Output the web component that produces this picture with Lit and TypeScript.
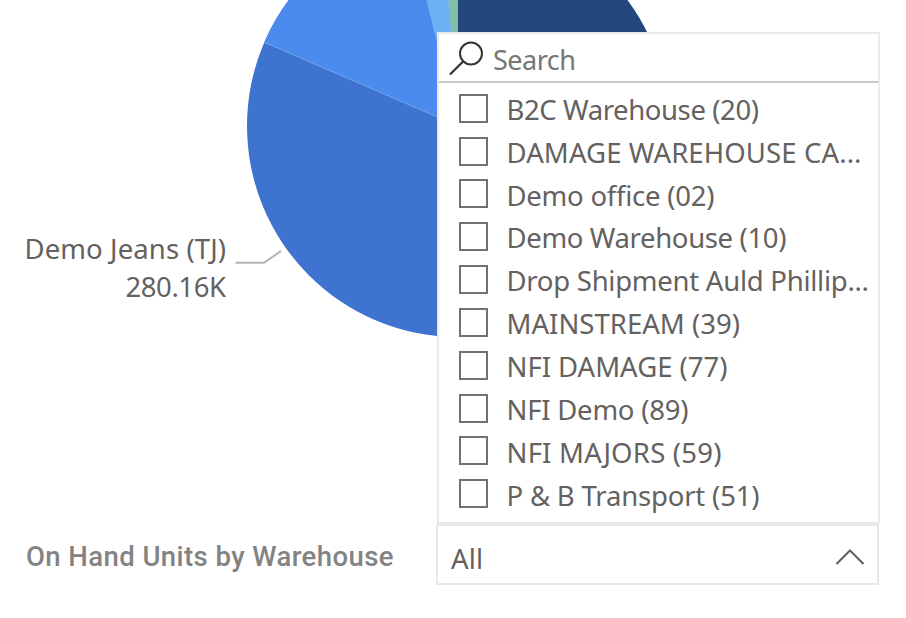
import { LitElement, html, css } from "lit";
import { customElement, property } from "lit/decorators.js";

/** A single line of text whose tracking is adjusted to fill a given width. */
@customElement("fit-text")
class FitText extends LitElement {
  @property() text = "";
  @property({ type: Number }) width = 0;

  static styles = css`
    :host { display: block; white-space: pre; }
    .run { display: inline-block; font-kerning: normal; font-variant-ligatures: none; }
  `;

  updated() {
    const run = this.renderRoot.querySelector(".run") as HTMLElement;
    run.style.letterSpacing = "0px";
    const natural = run.getBoundingClientRect().width;
    const gaps = Math.max(1, this.text.length - 1);
    const spacing = (this.width - natural) / gaps;
    run.style.letterSpacing = `${spacing}px`;
    run.style.marginRight = `${-spacing}px`;
  }

  render() {
    return html`<span class="run">${this.text}</span>`;
  }
}

interface Option { label: string; width: number; }

const OPTIONS: Option[] = [
  { label: "B2C Warehouse (20)", width: 252.5 },
  { label: "DAMAGE WAREHOUSE CA...", width: 355 },
  { label: "Demo office (02)", width: 208 },
  { label: "Demo Warehouse (10)", width: 280 },
  { label: "Drop Shipment Auld Phillip...", width: 362.5 },
  { label: "MAINSTREAM (39)", width: 233.5 },
  { label: "NFI DAMAGE (77)", width: 221 },
  { label: "NFI Demo (89)", width: 182 },
  { label: "NFI MAJORS (59)", width: 215 },
  { label: "P & B Transport (51)", width: 253 },
];

@customElement("app-root")
class AppRoot extends LitElement {
  static styles = css`
    :host {
      display: block; position: relative; width: 906px; height: 618px;
      overflow: hidden; background: #fff; color: #64615f;
      font: 27.5px/38px "Noto Sans", "Open Sans", sans-serif;
    }
    .chart { position: absolute; left: 0; top: 0; display: block; }
    .callout {
      position: absolute; left: 22px; top: 230px; width: 204px;
      display: flex; flex-direction: column; align-items: flex-end;
    }
    .title {
      position: absolute; left: 26px; top: 538px; color: #838383;
      font-family: Roboto, sans-serif; font-size: 27.5px; font-weight: 500;
    }
    .popup {
      position: absolute; left: 437px; top: 32px; width: 443px; height: 492px;
      box-sizing: border-box; border: 2px solid #ebebeb; background: #fff;
      display: flex; flex-direction: column;
    }
    .search {
      flex: none; height: 49px; box-sizing: border-box; border-bottom: 2px solid #c8c8c8;
      display: flex; align-items: center; gap: 8px; padding: 4px 0 0 10px; color: #767676;
      font-size: 27px;
    }
    .search svg { flex: none; margin-top: -4px; }
    .list { display: grid; grid-auto-rows: 42.85px; padding: 6px 0 0 20px; }
    .row { display: flex; align-items: center; gap: 18.5px; }
    .row fit-text { margin-top: -1px; }
    .box { flex: none; width: 29px; height: 29px; margin-top: -4.5px; box-sizing: border-box; border: 2px solid #737170; }
    .select {
      position: absolute; left: 436px; top: 524px; width: 443px; height: 61px;
      box-sizing: border-box; border: 2px solid #e8e8e8; background: #fff;
      display: flex; align-items: center; justify-content: space-between;
      padding: 9px 12px 0 13px;
    }
    .select svg { margin-top: -4px; }
  `;

  render() {
    return html`
      <svg class="chart" width="906" height="345" viewBox="0 0 906 345">
        <circle cx="458" cy="126" r="211" fill="#3e73cf" />
        <path d="M458 126 L264.3 42.3 A211 211 0 0 1 407.5 -78.9Z" fill="#4b8bed" />
        <path d="M458 126 L407.5 -78.9 A211 211 0 0 1 442.1 -84.4Z" fill="#6db1f5" />
        <path d="M458 126 L442.1 -84.4 A211 211 0 0 1 458 -85Z" fill="#83bfa8" />
        <path d="M458 126 L458 -85 A211 211 0 0 1 458 337Z" fill="#24477c" />
        <path d="M458 126 L264.3 42.3 M458 126 L407.5 -78.9 M458 126 L442.1 -84.4" stroke="#8fbcf7" stroke-width=".6" fill="none" />
        <path d="M235.5 262.7 H264 L281 251" fill="none" stroke="#b3b3b3" stroke-width="2" />
      </svg>

      <div class="callout">
        <fit-text text="Demo Jeans (TJ)" .width=${201.5}></fit-text>
        <fit-text text="280.16K" .width=${100.5}></fit-text>
      </div>

      <fit-text class="title" text="On Hand Units by Warehouse" .width=${367.5}></fit-text>

      <div class="popup">
        <div class="search">
          <svg width="36" height="36" viewBox="0 0 36 36" fill="none" stroke="#333" stroke-width="2">
            <circle cx="22" cy="13.5" r="11" />
            <path d="M14.3 21.3 L1 34.5" stroke-width="2.3" />
          </svg>
          <fit-text text="Search" .width=${83}></fit-text>
        </div>
        <div class="list">
          ${OPTIONS.map(
            (o) => html`<div class="row">
              <span class="box"></span>
              <fit-text .text=${o.label} .width=${o.width}></fit-text>
            </div>`
          )}
        </div>
      </div>

      <div class="select">
        <fit-text text="All" .width=${32}></fit-text>
        <svg width="30" height="18" viewBox="0 0 30 18" fill="none" stroke="#605e5c" stroke-width="2">
          <path d="M1.5 16 L15 2.5 L28.5 16" />
        </svg>
      </div>
    `;
  }
}
